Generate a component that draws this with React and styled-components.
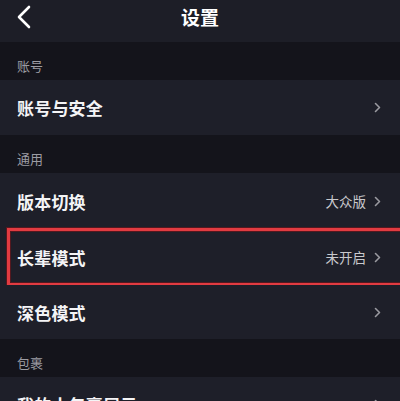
import React from 'react';
import styled, { createGlobalStyle } from 'styled-components';

const GlobalStyle = createGlobalStyle`
  html, body {
    margin: 0;
    padding: 0;
    background: #1e1f29;
    overflow: hidden;
  }
  body {
    font-family: "Noto Sans CJK SC", "Noto Sans", sans-serif;
  }
`;

const Page = styled.div`
  width: 400px;
  height: 401px;
  overflow: hidden;
  background: #1e1f29;
`;

const NavBar = styled.div`
  position: relative;
  height: 42px;
  display: flex;
  justify-content: center;
  align-items: flex-start;
  padding-top: 3px;
  box-sizing: border-box;
  background: #1d1e27;
`;

const BackButton = styled.div`
  position: absolute;
  left: 14px;
  top: 4px;
  width: 20px;
  height: 26px;
  display: flex;
  align-items: center;
  justify-content: center;
`;

const Title = styled.h1`
  margin: 0;
  font-size: 19px;
  line-height: 28px;
  font-weight: 700;
  color: #ffffff;
`;

const Section = styled.div`
  height: 38px;
  display: flex;
  align-items: flex-end;
  padding: 0 17px 5px;
  box-sizing: border-box;
  background: #14141b;
  font-size: 13px;
  line-height: 18px;
  color: #9c9ca3;
`;

const Row = styled.div`
  position: relative;
  height: ${p => p.h || 55}px;
  display: flex;
  align-items: center;
  justify-content: space-between;
  padding: 0 19px 0 17px;
  box-sizing: border-box;
  background: #1e1f29;
`;

const RowTitle = styled.span`
  font-size: 17px;
  font-weight: 700;
  color: #f4f4f6;
  letter-spacing: 0.2px;
`;

const RowRight = styled.div`
  display: flex;
  align-items: center;
  gap: 8px;
`;

const Value = styled.span`
  font-size: 13.5px;
  color: #c9c9cd;
`;

const Highlight = styled.div`
  position: absolute;
  left: 7px;
  top: -1px;
  right: -6px;
  bottom: -1px;
  border: 3.5px solid #e23b41;
  box-shadow: 0 0 0 1px rgba(120, 20, 25, 0.6), inset 0 0 0 1px rgba(120, 20, 25, 0.6);
  pointer-events: none;
`;

const Chevron = () => (
  <svg width="7" height="11" viewBox="0 0 7 11" fill="none">
    <path d="M1.5 1.5 L5.5 5.5 L1.5 9.5" stroke="#9a9aa0" strokeWidth="1.6" strokeLinecap="round" strokeLinejoin="round" />
  </svg>
);

const BackIcon = () => (
  <svg width="16" height="24" viewBox="0 0 16 24" fill="none">
    <path d="M13 2 L3 12 L13 22" stroke="#ffffff" strokeWidth="2.6" strokeLinecap="round" strokeLinejoin="round" />
  </svg>
);

const items = [
  { type: 'section', label: '账号' },
  { type: 'row', title: '账号与安全' },
  { type: 'section', label: '通用' },
  { type: 'row', title: '版本切换', value: '大众版', h: 56 },
  { type: 'row', title: '长辈模式', value: '未开启', h: 56, marked: true },
  { type: 'row', title: '深色模式', h: 54 },
  { type: 'section', label: '包裹' },
  { type: 'row', title: '我的小包裹展示' },
];

export default function App() {
  return (
    <Page>
      <GlobalStyle />
      <NavBar>
        <BackButton>
          <BackIcon />
        </BackButton>
        <Title>设置</Title>
      </NavBar>
      {items.map((it, i) =>
        it.type === 'section' ? (
          <Section key={i}>{it.label}</Section>
        ) : (
          <Row key={i} h={it.h}>
            <RowTitle>{it.title}</RowTitle>
            <RowRight>
              {it.value && <Value>{it.value}</Value>}
              <Chevron />
            </RowRight>
            {it.marked && <Highlight />}
          </Row>
        )
      )}
    </Page>
  );
}
